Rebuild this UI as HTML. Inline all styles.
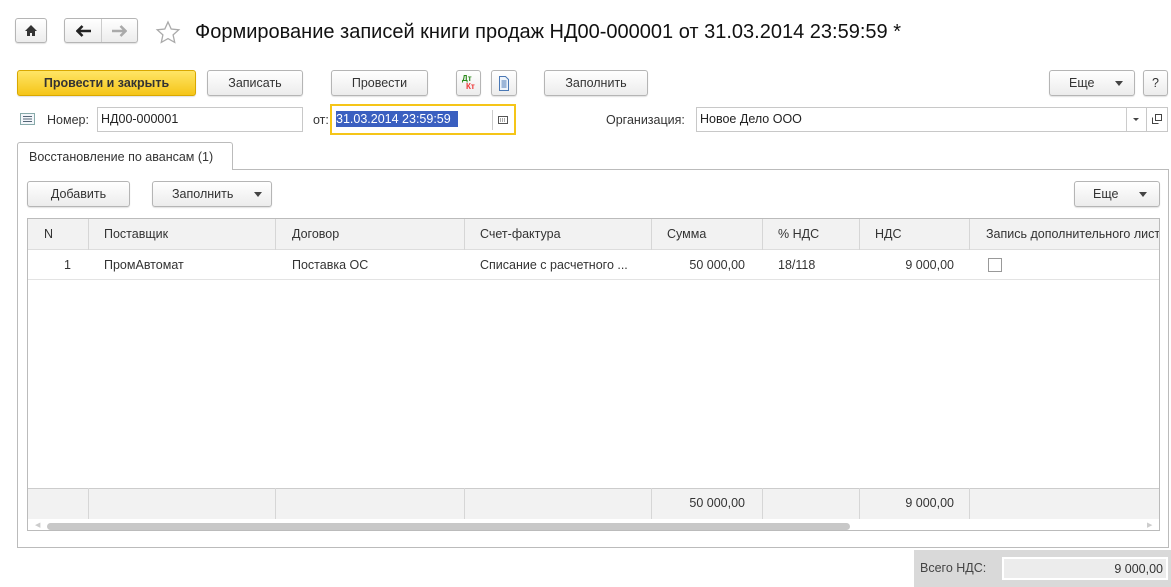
<!DOCTYPE html>
<html><head><meta charset="utf-8"><style>
*{box-sizing:border-box;margin:0;padding:0}
body{width:1171px;height:587px;background:#fff;font-family:"Liberation Sans",Arial,sans-serif;font-size:12.5px;color:#333;position:relative;overflow:hidden}
.a{position:absolute}
.btn{position:absolute;border:1px solid #b5b5b5;border-radius:3px;background:linear-gradient(#fff,#ececec);text-align:center;color:#333;box-shadow:0 1px 1px rgba(0,0,0,.12)}
.inp{position:absolute;border:1px solid #c8c8c8;background:#fff;padding:4px 3px;color:#222}
.tri{display:inline-block;width:0;height:0;border-left:4px solid transparent;border-right:4px solid transparent;border-top:5px solid #444;vertical-align:middle}
.col{position:absolute;top:0;bottom:0;border-left:1px solid #d6d6d6}
</style></head><body>
<div class="btn" style="left:15px;top:18px;width:32px;height:25px"><svg width="14" height="13" viewBox="0 0 14 13" style="margin-top:5px"><path d="M7 1L1 7h2v5h3V9h2v3h3V7h2z" fill="#333"/></svg></div>
<div class="btn" style="left:64px;top:18px;width:74px;height:25px"><div class="a" style="left:36px;top:0;bottom:0;border-left:1px solid #ccc"></div>
<svg class="a" style="left:11px;top:6px" width="16" height="12" viewBox="0 0 16 12"><path d="M1 6h14M6.5 1L1.5 6l5 5" fill="none" stroke="#222" stroke-width="2.6"/></svg>
<svg class="a" style="left:46px;top:6px" width="16" height="12" viewBox="0 0 16 12"><path d="M1 6h14M9.5 1l5 5-5 5" fill="none" stroke="#aaa" stroke-width="2.6"/></svg></div>
<svg class="a" style="left:155px;top:20px" width="26" height="25" viewBox="0 0 26 25"><path d="M13 2l3.2 7 7.6.8-5.7 5.1 1.6 7.5L13 18.6l-6.7 3.8 1.6-7.5L2.2 9.8l7.6-.8z" fill="none" stroke="#aaa" stroke-width="1.3"/></svg>
<div class="a" style="left:195px;top:21px;font-size:20px;color:#111">Формирование записей книги продаж НД00-000001 от 31.03.2014 23:59:59 *</div>

<div class="btn" style="left:17px;top:70px;width:179px;height:26px;background:linear-gradient(#ffe566,#f5c518);border-color:#d9a800;font-weight:bold;line-height:24px;color:#333">Провести и закрыть</div>
<div class="btn" style="left:207px;top:70px;width:96px;height:26px;line-height:24px">Записать</div>
<div class="btn" style="left:331px;top:70px;width:97px;height:26px;line-height:24px">Провести</div>
<div class="btn" style="left:456px;top:70px;width:25px;height:26px"><span class="a" style="left:5px;top:3px;font-size:8px;font-weight:bold;color:#2a8a1a">Дт</span><span class="a" style="left:9px;top:11px;font-size:8px;font-weight:bold;color:#e33">Кт</span></div>
<div class="btn" style="left:491px;top:70px;width:26px;height:26px"><svg width="12" height="15" viewBox="0 0 12 15" style="margin-top:5px"><path d="M1.5.5h6l3 3v11h-9z" fill="#eef4fb" stroke="#4a78b5"/><path d="M3.5 5h5M3.5 7h5M3.5 9h5M3.5 11h5" stroke="#4a78b5"/></svg></div>
<div class="btn" style="left:544px;top:70px;width:104px;height:26px;line-height:24px">Заполнить</div>
<div class="btn" style="left:1049px;top:70px;width:86px;height:26px;line-height:24px;text-align:left;padding-left:19px">Еще <span class="tri" style="margin-left:17px"></span></div>
<div class="btn" style="left:1143px;top:70px;width:25px;height:26px;line-height:24px">?</div>

<svg class="a" style="left:20px;top:113px" width="15" height="12"><rect x=".5" y=".5" width="14" height="11" fill="#f3f6fa" stroke="#8aa"/><path d="M3 3.5h9M3 6h9M3 8.5h9" stroke="#567"/></svg>
<div class="a" style="left:47px;top:113px">Номер:</div>
<div class="inp" style="left:97px;top:107px;width:206px;height:25px">НД00-000001</div>
<div class="a" style="left:313px;top:113px">от:</div>
<div class="a" style="left:330px;top:104px;width:186px;height:31px;border:2px solid #f5c518;background:#fff">
 <span class="a" style="left:4px;top:5px;background:#3a5fc0;color:#fff;padding:1px 0;width:122px">31.03.2014 23:59:59</span>
 <div class="a" style="left:160px;top:4px;height:20px;border-left:1px solid #ccc"></div>
 <svg class="a" style="left:166px;top:10px" width="10" height="8"><rect x=".5" y=".5" width="9" height="7" fill="none" stroke="#555"/><path d="M2 3h6M2 5h6" stroke="#555" stroke-dasharray="1 1"/></svg>
</div>
<div class="a" style="left:606px;top:113px">Организация:</div>
<div class="inp" style="left:696px;top:107px;width:451px;height:25px">Новое Дело ООО</div>
<div class="a" style="left:1126px;top:108px;height:23px;border-left:1px solid #ccc"></div>
<span class="tri a" style="left:1133px;top:118px;border-width:3px 3px 0 3px"></span>
<div class="inp" style="left:1146px;top:107px;width:22px;height:25px"></div>
<svg class="a" style="left:1152px;top:114px" width="10" height="10"><path d="M3.5 .5h6v6h-6zM.5 3.5v6h6" fill="none" stroke="#444"/></svg>

<div class="a" style="left:17px;top:169px;width:1152px;height:379px;border:1px solid #bbb"></div>
<div class="a" style="left:17px;top:142px;width:216px;height:28px;border:1px solid #bbb;border-bottom:none;border-radius:3px 3px 0 0;background:#fff;padding:7px 0 0 11px">Восстановление по авансам (1)</div>

<div class="btn" style="left:27px;top:181px;width:103px;height:26px;line-height:24px">Добавить</div>
<div class="btn" style="left:152px;top:181px;width:120px;height:26px;line-height:24px;text-align:left;padding-left:19px">Заполнить <span class="tri" style="margin-left:17px"></span></div>
<div class="btn" style="left:1074px;top:181px;width:86px;height:26px;line-height:24px;text-align:left;padding-left:18px">Еще <span class="tri" style="margin-left:17px"></span></div>

<div class="a" style="left:27px;top:218px;width:1133px;height:313px;border:1px solid #bbb;overflow:hidden">
 <div class="a" style="left:0;top:0;width:100%;height:31px;background:#f2f2f2;border-bottom:1px solid #ddd"></div>
 <div class="a" style="left:0;top:31px;width:100%;height:30px;border-bottom:1px solid #e3e3e3"></div>
 <div class="a" style="left:0;top:269px;width:100%;height:31px;background:#f2f2f2;border-top:1px solid #ccc"></div>
 <div class="a" style="left:0;top:0;width:100%;height:31px">
  <div class="col" style="left:60px"></div><div class="col" style="left:247px"></div><div class="col" style="left:436px"></div><div class="col" style="left:623px"></div><div class="col" style="left:734px"></div><div class="col" style="left:831px"></div><div class="col" style="left:941px"></div>
 </div>
 <div class="a" style="left:0;top:269px;width:100%;height:31px">
  <div class="col" style="left:60px"></div><div class="col" style="left:247px"></div><div class="col" style="left:436px"></div><div class="col" style="left:623px"></div><div class="col" style="left:734px"></div><div class="col" style="left:831px"></div><div class="col" style="left:941px"></div>
 </div>
 <div class="a" style="top:8px;left:16px">N</div>
 <div class="a" style="top:8px;left:76px">Поставщик</div>
 <div class="a" style="top:8px;left:264px">Договор</div>
 <div class="a" style="top:8px;left:452px">Счет-фактура</div>
 <div class="a" style="top:8px;left:639px">Сумма</div>
 <div class="a" style="top:8px;left:750px">% НДС</div>
 <div class="a" style="top:8px;left:847px">НДС</div>
 <div class="a" style="top:8px;left:958px;white-space:nowrap">Запись дополнительного листа</div>
 <div class="a" style="top:39px;left:36px">1</div>
 <div class="a" style="top:39px;left:76px">ПромАвтомат</div>
 <div class="a" style="top:39px;left:264px">Поставка ОС</div>
 <div class="a" style="top:39px;left:452px">Списание с расчетного ...</div>
 <div class="a" style="top:39px;left:623px;width:94px;text-align:right">50 000,00</div>
 <div class="a" style="top:39px;left:750px">18/118</div>
 <div class="a" style="top:39px;left:831px;width:95px;text-align:right">9 000,00</div>
 <div class="a" style="top:39px;left:960px;width:14px;height:14px;border:1px solid #999;background:#fff"></div>
 <div class="a" style="top:277px;left:623px;width:94px;text-align:right">50 000,00</div>
 <div class="a" style="top:277px;left:831px;width:95px;text-align:right">9 000,00</div>
 <div class="a" style="top:304px;left:19px;width:803px;height:7px;border-radius:4px;background:#c8c8c8"></div>
 <span class="a" style="top:302px;left:7px;font-size:7px;color:#ccc">◀</span>
 <span class="a" style="top:302px;left:1119px;font-size:7px;color:#ccc">▶</span>
</div>

<div class="a" style="left:914px;top:550px;width:257px;height:37px;background:#d9d9d9"></div>
<div class="a" style="left:920px;top:561px;color:#444">Всего НДС:</div>
<div class="a" style="left:1002px;top:557px;width:166px;height:23px;background:#ececec;border:2px solid #fff;text-align:right;padding:3px 3px 0 0;color:#333">9 000,00</div>
</body></html>
